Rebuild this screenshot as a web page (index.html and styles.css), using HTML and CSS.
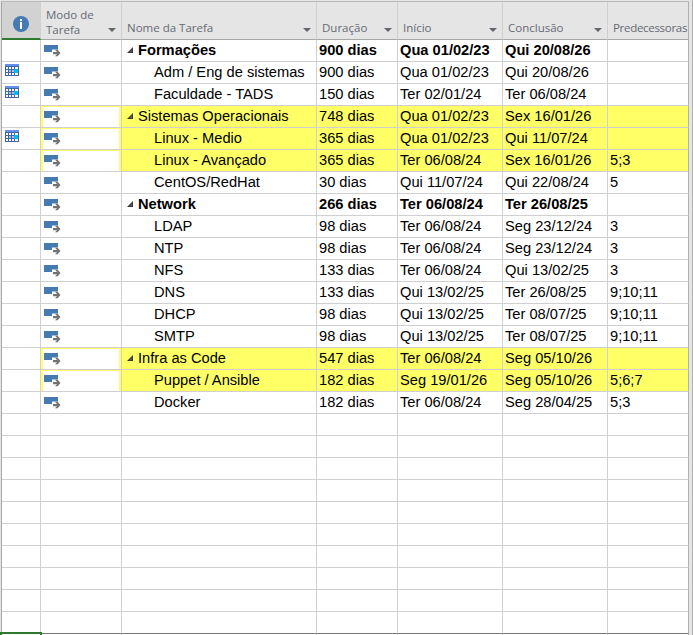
FILE: index.html
```
<!DOCTYPE html>
<html lang="pt-BR">
<head>
<meta charset="utf-8">
<title>Tarefas</title>
<link rel="stylesheet" href="styles.css">
</head>
<body>
<svg class="defs" width="0" height="0">
  <symbol id="cal" viewBox="0 0 14 12">
    <path fill="#3f66a3" d="M0 0h14v12H0z"/>
    <path fill="#668ff0" d="M0 0h14v2H0z"/>
    <path fill="#fff" d="M1 3h2v2H1zM4 3h2v2H4zM7 3h2v2H7zM10 3h3v2h-3zM1 6h2v2H1zM1 9h2v2H1zM4 9h2v2H4zM7 9h2v2H7zM10 9h3v2h-3z"/>
    <path fill="#a9bfd8" d="M4 6h2v2H4zM7 6h2v2H7z"/>
    <path fill="#08b8f5" d="M9 5h4v4H9z"/>
  </symbol>
  <symbol id="auto" viewBox="0 0 17 12">
    <path fill="#457bb2" d="M0 0h14v4.5H8V7H0z"/>
    <path fill="#737373" d="M9 7h4l-2-2.2h2.6L16.5 8l-2.9 3.2H11L13 9.2H9z"/>
  </symbol>
  <symbol id="fold" viewBox="0 0 6 6">
    <path fill="#383838" d="M6 0v6H0z"/><path fill="#555" d="M5 2.3V5H2.3z"/>
  </symbol>
  <symbol id="drop" viewBox="0 0 8 4"><path fill="#62666e" d="M0 0h8L4 4z"/></symbol>
</svg>
<div class="sheet">
  <div class="row head">
    <div class="cell info"><svg width="16" height="16" viewBox="0 0 16 16"><circle cx="8" cy="8" r="8" fill="#457bb2"/><path fill="#fff" d="M7 3h2v2H7zM7 6h2v7H7z"/></svg></div>
    <div class="cell two"><span>Modo de<br>Tarefa</span><svg class="drop"><use href="#drop"/></svg></div>
    <div class="cell"><span>Nome da Tarefa</span><svg class="drop"><use href="#drop"/></svg></div>
    <div class="cell"><span>Duração</span><svg class="drop"><use href="#drop"/></svg></div>
    <div class="cell"><span>Início</span><svg class="drop"><use href="#drop"/></svg></div>
    <div class="cell"><span>Conclusão</span><svg class="drop"><use href="#drop"/></svg></div>
    <div class="cell pred"><span>Predecessoras</span></div>
  </div>
  <div id="rows"></div>
  <div class="row next"><div class="cell"></div><div class="cell"></div><div class="cell"></div><div class="cell"></div><div class="cell"></div><div class="cell"></div><div class="cell"></div></div>
  <div class="active"></div>
</div>
<script src="rows.js"></script>
</body>
</html>
```
FILE: styles.css
```
body { margin: 0; width: 693px; height: 635px; overflow: hidden; background: #e5e5e5; font-family: "Liberation Sans", Arial, sans-serif; }
.defs { position: absolute; }
.sheet { box-sizing: border-box; width: 693px; height: 635px; padding-top: 1px; border-left: 1px solid #e5e5e5; border-right: 1px solid #b0b0b0; position: relative; }
.row { box-sizing: border-box; display: grid; grid-template-columns: 39px 81px 195px 81px 105px 105px 81px; width: 688px; height: 22px; border-left: 1px solid #a6a6a6; background: #fff; }
.cell { box-sizing: border-box; display: flex; min-width: 0; overflow: hidden; white-space: pre; border-right: 1px solid #d0d0d0; border-bottom: 1px solid #d0d0d0; padding-left: 2px; font-size: 14.67px; line-height: 20px; color: #000; }
.cell:last-child { border-right-color: #b0b0b0; }
.row.head { height: 39px; border-top: 1px solid #b8b8b8; background: #e5e5e5; }
.head .cell { align-items: flex-end; justify-content: space-between; padding: 0 5px 2px 5px; border-bottom-color: #a6a6a6; font-family: "Open Sans", "Noto Sans", sans-serif; font-size: 11.5px; line-height: 15px; letter-spacing: 0; color: #666a73; }
.head span { margin-bottom: 2px; }
.head .two span { margin-bottom: 0; }
.head .cell.pred { padding-right: 0; letter-spacing: -.3px; }
.head .cell.info { justify-content: center; align-items: center; padding: 8px 0 0; background: #d2d2d2; border-bottom: 2px solid #2f7b2d; }
.drop { width: 8px; height: 4px; flex: none; margin-bottom: 5px; }
.ind { padding: 2px 0 0 3px; }
.mode { padding: 5px 0 0 3px; }
.cal { width: 14px; height: 12px; }
.auto { width: 17px; height: 12px; }
.fold { width: 6px; height: 6px; margin: 7px 5px 0 0; flex: none; }
.name { padding-left: 5px; }
.child { padding-left: 32px; }
.bold .cell { font-weight: 700; }
.mark .cell:nth-child(n+3) { background: #ffff66; }
.mark .mode { box-shadow: inset 2px 1px #ffff66, inset -2px 0 #ffff66; }
.row:nth-child(27) .cell { border-bottom-color: #777; }
.next { height: 1px; overflow: hidden; }
.next .cell { height: 2px; }
.active { position: absolute; left: -1px; top: 632px; width: 42px; height: 3px; box-sizing: border-box; border: 2px solid #2f7b2d; border-bottom: 0; background: #fff; }
```
FILE: rows.js
```
// [name, duration, start, finish, predecessors, flags]
// flags: b = bold, s = summary task, y = highlighted, c = calendar indicator
const tasks = [
  ["Formações", "900 dias", "Qua 01/02/23", "Qui 20/08/26", "", "bs"],
  ["Adm / Eng de sistemas", "900 dias", "Qua 01/02/23", "Qui 20/08/26", "", "c"],
  ["Faculdade - TADS", "150 dias", "Ter 02/01/24", "Ter 06/08/24", "", "c"],
  ["Sistemas Operacionais", "748 dias", "Qua 01/02/23", "Sex 16/01/26", "", "sy"],
  ["Linux - Medio", "365 dias", "Qua 01/02/23", "Qui 11/07/24", "", "yc"],
  ["Linux - Avançado", "365 dias", "Ter 06/08/24", "Sex 16/01/26", "5;3", "y"],
  ["CentOS/RedHat", "30 dias", "Qui 11/07/24", "Qui 22/08/24", "5", ""],
  ["Network", "266 dias", "Ter 06/08/24", "Ter 26/08/25", "", "bs"],
  ["LDAP", "98 dias", "Ter 06/08/24", "Seg 23/12/24", "3", ""],
  ["NTP", "98 dias", "Ter 06/08/24", "Seg 23/12/24", "3", ""],
  ["NFS", "133 dias", "Ter 06/08/24", "Qui 13/02/25", "3", ""],
  ["DNS", "133 dias", "Qui 13/02/25", "Ter 26/08/25", "9;10;11", ""],
  ["DHCP", "98 dias", "Qui 13/02/25", "Ter 08/07/25", "9;10;11", ""],
  ["SMTP", "98 dias", "Qui 13/02/25", "Ter 08/07/25", "9;10;11", ""],
  ["Infra as Code", "547 dias", "Ter 06/08/24", "Seg 05/10/26", "", "sy"],
  ["Puppet / Ansible", "182 dias", "Seg 19/01/26", "Seg 05/10/26", "5;6;7", "y"],
  ["Docker", "182 dias", "Ter 06/08/24", "Seg 28/04/25", "5;3", ""]
];
const icon = id => `<svg class="${id}"><use href="#${id}"/></svg>`;
let html = "";
for (let i = 0; i < 27; i++) {
  const t = tasks[i];
  const [name, dur, start, end, pred, f] = t || ["", "", "", "", "", ""];
  const has = k => f.includes(k);
  html += `<div class="row${has("b") ? " bold" : ""}${has("y") ? " mark" : ""}">
<div class="cell ind">${has("c") ? icon("cal") : ""}</div>
<div class="cell mode">${t ? icon("auto") : ""}</div>
<div class="cell name${has("s") ? "" : " child"}">${has("s") ? icon("fold") : ""}<span>${name}</span></div>
<div class="cell">${dur}</div><div class="cell">${start}</div><div class="cell">${end}</div><div class="cell">${pred}</div></div>`;
}
document.getElementById("rows").innerHTML = html;
```
